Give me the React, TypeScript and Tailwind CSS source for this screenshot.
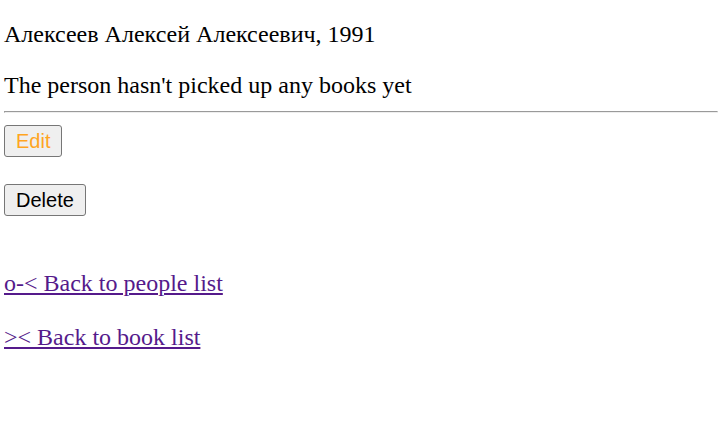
export default function App() {
  return (
    <main className="bg-white px-1 pt-5 font-['Liberation_Serif',serif] text-[24px] leading-[27px] text-black">
      <p className="mt-px">Алексеев Алексей Алексеевич, 1991</p>
      <p className="mt-6">The person hasn't picked up any books yet</p>
      <hr className="-mr-1 mt-3 h-[2px] border border-b-[#eeeeee] border-l-[#9a9a9a] border-r-[#eeeeee] border-t-[#9a9a9a]" />
      <div className="mt-3 flex flex-col items-start gap-[27px] font-['Liberation_Sans',sans-serif] text-[20px]">
        <button type="button" className="h-8 rounded-[3px] border border-[#767676] bg-[#efefef] px-[11px] leading-[30px] text-[#ffa51f]">
          Edit
        </button>
        <button type="button" className="h-8 rounded-[3px] border border-[#767676] bg-[#efefef] px-[11px] leading-[30px]">
          Delete
        </button>
      </div>
      <nav className="mt-[54px] flex flex-col items-start gap-[27px] text-[#551a8b]">
        <a href="#people" className="underline decoration-2 underline-offset-2">{"o-< Back to people list"}</a>
        <a href="#books" className="underline decoration-2 underline-offset-2">{">< Back to book list"}</a>
      </nav>
    </main>
  );
}
